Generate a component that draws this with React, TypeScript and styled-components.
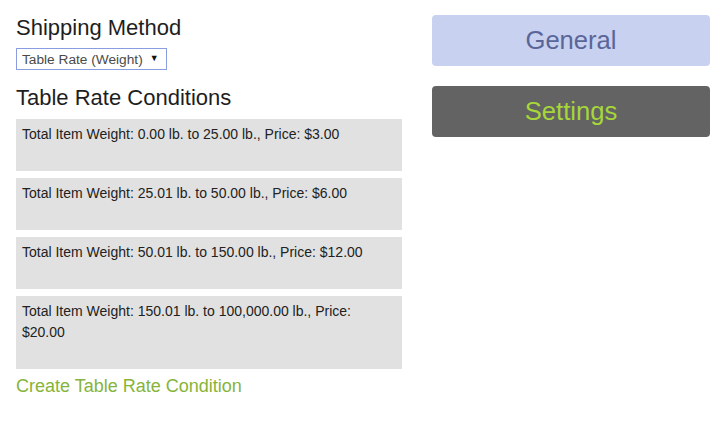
import React from "react";
import styled, { createGlobalStyle } from "styled-components";

const Global = createGlobalStyle`
  html, body { margin: 0; padding: 0; background: #ffffff; }
  body { font-family: "Liberation Sans", Arial, sans-serif; color: #222; }
`;

const Page = styled.div`
  display: flex;
  align-items: flex-start;
  gap: 30px;
  padding: 15px 14px 0 16px;
`;

const LeftColumn = styled.div`
  width: 386px;
  display: flex;
  flex-direction: column;
`;

const RightColumn = styled.div`
  flex: 1;
  display: flex;
  flex-direction: column;
  gap: 20px;
`;

const Heading = styled.h2`
  margin: 0;
  font-size: 22px;
  font-weight: normal;
  line-height: 25px;
  color: #1e1e1e;
`;

const SelectWrap = styled.div`
  margin: 8px 0 15px;
  width: 151px;
  height: 22px;
  box-sizing: border-box;
  border: 1px solid #8a9de0;
  display: flex;
  align-items: center;
  gap: 7px;
  padding: 0 5px;
  font-size: 13.7px;
  color: #4a4a4a;
`;

const Caret = styled.span`
  font-size: 9px;
  color: #111;
  margin-top: -2px;
`;

const Conditions = styled.div`
  margin-top: 9px;
  display: flex;
  flex-direction: column;
  gap: 7px;
`;

const Condition = styled.div`
  background: #e1e1e1;
  padding: 5px 6px 26px 6px;
  font-size: 14px;
  line-height: 21px;
  color: #222;
`;

const CreateLink = styled.a`
  margin-top: 5px;
  font-size: 18px;
  line-height: 24px;
  color: #86b43a;
  text-decoration: none;
  cursor: pointer;
`;

const TabButton = styled.div<{ $bg: string; $fg: string }>`
  height: 51px;
  border-radius: 4px;
  background: ${(p) => p.$bg};
  color: ${(p) => p.$fg};
  font-size: 25.6px;
  display: flex;
  align-items: center;
  justify-content: center;
`;

const conditions = [
  "Total Item Weight: 0.00 lb. to 25.00 lb., Price: $3.00",
  "Total Item Weight: 25.01 lb. to 50.00 lb., Price: $6.00",
  "Total Item Weight: 50.01 lb. to 150.00 lb., Price: $12.00",
  "Total Item Weight: 150.01 lb. to 100,000.00 lb., Price: $20.00",
];

export default function App() {
  return (
    <>
      <Global />
      <Page>
        <LeftColumn>
          <Heading>Shipping Method</Heading>
          <SelectWrap>
            <span>Table Rate (Weight)</span>
            <Caret>▼</Caret>
          </SelectWrap>
          <Heading>Table Rate Conditions</Heading>
          <Conditions>
            {conditions.map((c) => (
              <Condition key={c}>{c}</Condition>
            ))}
          </Conditions>
          <CreateLink>Create Table Rate Condition</CreateLink>
        </LeftColumn>
        <RightColumn>
          <TabButton $bg="#c8d1f0" $fg="#5a6699">General</TabButton>
          <TabButton $bg="#636363" $fg="#a6d63a">Settings</TabButton>
        </RightColumn>
      </Page>
    </>
  );
}
